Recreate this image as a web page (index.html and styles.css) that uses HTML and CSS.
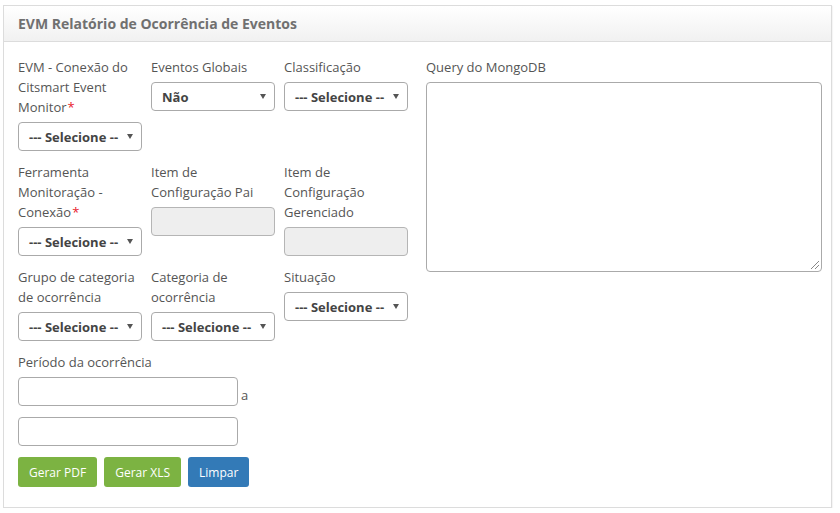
FILE: index.html
```html
<!DOCTYPE html>
<html lang="pt">
<head>
<meta charset="utf-8">
<title>EVM Relatório de Ocorrência de Eventos</title>
<link rel="stylesheet" href="styles.css">
</head>
<body>
<div class="panel">
  <div class="panel-heading">
    <h2 class="panel-title">EVM Relatório de Ocorrência de Eventos</h2>
  </div>
  <div class="panel-body">
    <div class="form-left">
      <div class="field">
        <label class="lbl">EVM - Conexão do Citsmart Event Monitor<span class="req">*</span></label>
        <div class="sel"><span class="sel-text">--- Selecione --</span></div>
      </div>
      <div class="field">
        <label class="lbl">Eventos Globais</label>
        <div class="sel"><span class="sel-text">Não</span></div>
      </div>
      <div class="field">
        <label class="lbl">Classificação</label>
        <div class="sel"><span class="sel-text">--- Selecione --</span></div>
      </div>

      <div class="field">
        <label class="lbl">Ferramenta Monitoração - Conexão<span class="req">*</span></label>
        <div class="sel"><span class="sel-text">--- Selecione --</span></div>
      </div>
      <div class="field">
        <label class="lbl">Item de Configuração Pai</label>
        <div class="inp disabled"></div>
      </div>
      <div class="field">
        <label class="lbl">Item de Configuração Gerenciado</label>
        <div class="inp disabled"></div>
      </div>

      <div class="field">
        <label class="lbl">Grupo de categoria de ocorrência</label>
        <div class="sel"><span class="sel-text">--- Selecione --</span></div>
      </div>
      <div class="field">
        <label class="lbl">Categoria de ocorrência</label>
        <div class="sel"><span class="sel-text">--- Selecione --</span></div>
      </div>
      <div class="field">
        <label class="lbl">Situação</label>
        <div class="sel"><span class="sel-text">--- Selecione --</span></div>
      </div>

      <div class="field field-wide">
        <label class="lbl">Período da ocorrência</label>
        <div class="period-row">
          <div class="inp date"></div><span class="sep">a</span>
        </div>
        <div class="inp date second"></div>
        <div class="actions">
          <button class="btn btn-green">Gerar PDF</button>
          <button class="btn btn-green">Gerar XLS</button>
          <button class="btn btn-blue">Limpar</button>
        </div>
      </div>
    </div>
    <div class="form-right">
      <label class="lbl">Query do MongoDB</label>
      <div class="textarea"><span class="grip"></span></div>
    </div>
  </div>
</div>
</body>
</html>
```
FILE: styles.css
```css
* { box-sizing: border-box; }
html, body { margin: 0; padding: 0; background: #fff; }
body {
  font-family: "Open Sans", "Liberation Sans", sans-serif;
  font-size: 13px;
  color: #555;
  padding: 5px 8px 0 3px;
}
.panel {
  width: 829px;
  height: 503px;
  border: 1px solid #dcdcdc;
  box-shadow: 1px 1px 1px rgba(0,0,0,0.04);
  background: #fff;
}
.panel-heading {
  height: 36px;
  background: linear-gradient(#ffffff, #f1f1f1);
  border-bottom: 1px solid #dcdcdc;
  padding: 0 14px;
  display: flex;
  align-items: center;
}
.panel-title {
  margin: 0;
  font-size: 14px;
  font-weight: 700;
  color: #707070;
}
.panel-body {
  display: flex;
  padding: 15px 9px 0 14px;
}
.form-left {
  width: 390px;
  display: grid;
  grid-template-columns: 124px 124px 124px;
  column-gap: 9px;
  row-gap: 11px;
  align-items: start;
}
.field { display: flex; flex-direction: column; }
.field-wide { grid-column: 1 / 4; }
.lbl {
  display: block;
  line-height: 20px;
  margin-bottom: 5px;
  color: #555;
}
.req { color: #e8202a; margin-left: 1px; }
.sel {
  position: relative;
  height: 29px;
  border: 1px solid #aaa;
  border-radius: 4px;
  background: #fff;
  padding: 0 0 0 10px;
  display: flex;
  align-items: center;
  font-weight: 700;
  color: #444;
}
.sel::after {
  content: "";
  position: absolute;
  right: 8px;
  top: 11px;
  border-left: 3px solid transparent;
  border-right: 3px solid transparent;
  border-top: 5px solid #555;
}
.inp {
  height: 29px;
  border: 1px solid #aaa;
  border-radius: 4px;
  background: #fff;
}
.inp.disabled { background: #eee; border-color: #b5b5b5; }
.period-row { display: flex; align-items: flex-end; }
.inp.date { width: 220px; }
.sep { margin-left: 3px; line-height: 20px; margin-bottom: 1px; }
.inp.second { margin-top: 11px; }
.actions { display: flex; gap: 7px; margin-top: 11px; }
.btn {
  height: 30px;
  border: none;
  border-radius: 3px;
  color: #fff;
  font-family: "Open Sans", "Liberation Sans", sans-serif;
  font-size: 12px;
  padding: 0 11px;
  cursor: pointer;
}
.btn-green { background: #7cb342; }
.btn-blue { background: #337ab7; }
.form-right { margin-left: 18px; width: 396px; }
.textarea {
  position: relative;
  height: 190px;
  border: 1px solid #aaa;
  border-radius: 4px;
  background: #fff;
}
.grip {
  position: absolute;
  right: 2px;
  bottom: 2px;
  width: 8px;
  height: 8px;
  background: linear-gradient(135deg, transparent 45%, #888 45%, #888 52%, transparent 52%, transparent 70%, #888 70%, #888 77%, transparent 77%);
}
```
